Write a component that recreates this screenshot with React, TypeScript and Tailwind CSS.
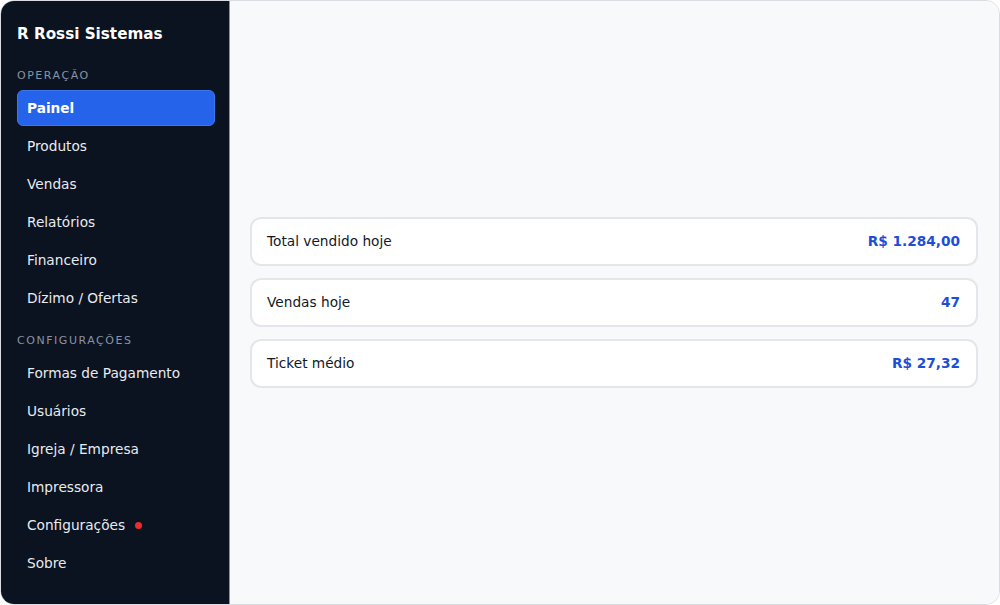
import React from "react";

type Stat = { label: string; value: string };

const operacao = ["Produtos", "Vendas", "Relatórios", "Financeiro", "Dízimo / Ofertas"];
const configuracoes = ["Formas de Pagamento", "Usuários", "Igreja / Empresa", "Impressora", "Configurações", "Sobre"];

const stats: Stat[] = [
  { label: "Total vendido hoje", value: "R$ 1.284,00" },
  { label: "Vendas hoje", value: "47" },
  { label: "Ticket médio", value: "R$ 27,32" },
];

function NavItem({ label, dot }: { label: string; dot?: boolean }) {
  return (
    <div className="flex h-9 items-center gap-[10px] rounded-md px-[10px] text-[13.7px] text-[#e8ebf0]">
      <span>{label}</span>
      {dot && <span className="h-[7px] w-[7px] rounded-full bg-[#ef2b2b]" />}
    </div>
  );
}

function SectionLabel({ children }: { children: React.ReactNode }) {
  return (
    <div className="mb-[6px] h-[16px] text-[11px] leading-[16px] tracking-[0.14em] text-[#8a93a3]">{children}</div>
  );
}

export default function App() {
  return (
    <div
      className="h-[605px] w-[1000px] bg-white"
      style={{ fontFamily: '"DejaVu Sans", "Noto Sans", sans-serif' }}
    >
      <div className="flex h-full w-full overflow-hidden rounded-[14px] border border-[#d9dce1]">
        <aside className="flex w-[229px] shrink-0 flex-col border-r border-[#8e939b] bg-[#0b1220] pl-[16px] pr-[14px] pt-[22px]">
          <div className="h-[22px] text-[15.2px] font-bold leading-[22px] text-white">R Rossi Sistemas</div>
          <div className="mt-[23px]">
            <SectionLabel>OPERAÇÃO</SectionLabel>
          </div>
          <div className="flex flex-col gap-[2px]">
            <div className="flex h-9 items-center rounded-md border border-[#3b78f0] bg-[#2563eb] px-[9px] text-[13.7px] font-bold text-white">
              Painel
            </div>
            {operacao.map((l) => (
              <NavItem key={l} label={l} />
            ))}
          </div>
          <div className="mt-[17px]">
            <SectionLabel>CONFIGURAÇÕES</SectionLabel>
          </div>
          <div className="flex flex-col gap-[2px]">
            {configuracoes.map((l) => (
              <NavItem key={l} label={l} dot={l === "Configurações"} />
            ))}
          </div>
        </aside>
        <main className="flex flex-1 flex-col justify-center bg-[#f8f9fb] pl-5 pr-[21px]">
          <div className="flex flex-col gap-3">
            {stats.map((s) => (
              <div
                key={s.label}
                className="flex h-[49px] items-center justify-between rounded-[11px] border-2 border-[#e3e6ea] bg-white pl-[15px] pr-[16px] text-[13.7px]"
              >
                <span className="text-[#111827]">{s.label}</span>
                <span className="font-bold text-[#1d4ed8]">{s.value}</span>
              </div>
            ))}
          </div>
        </main>
      </div>
    </div>
  );
}
